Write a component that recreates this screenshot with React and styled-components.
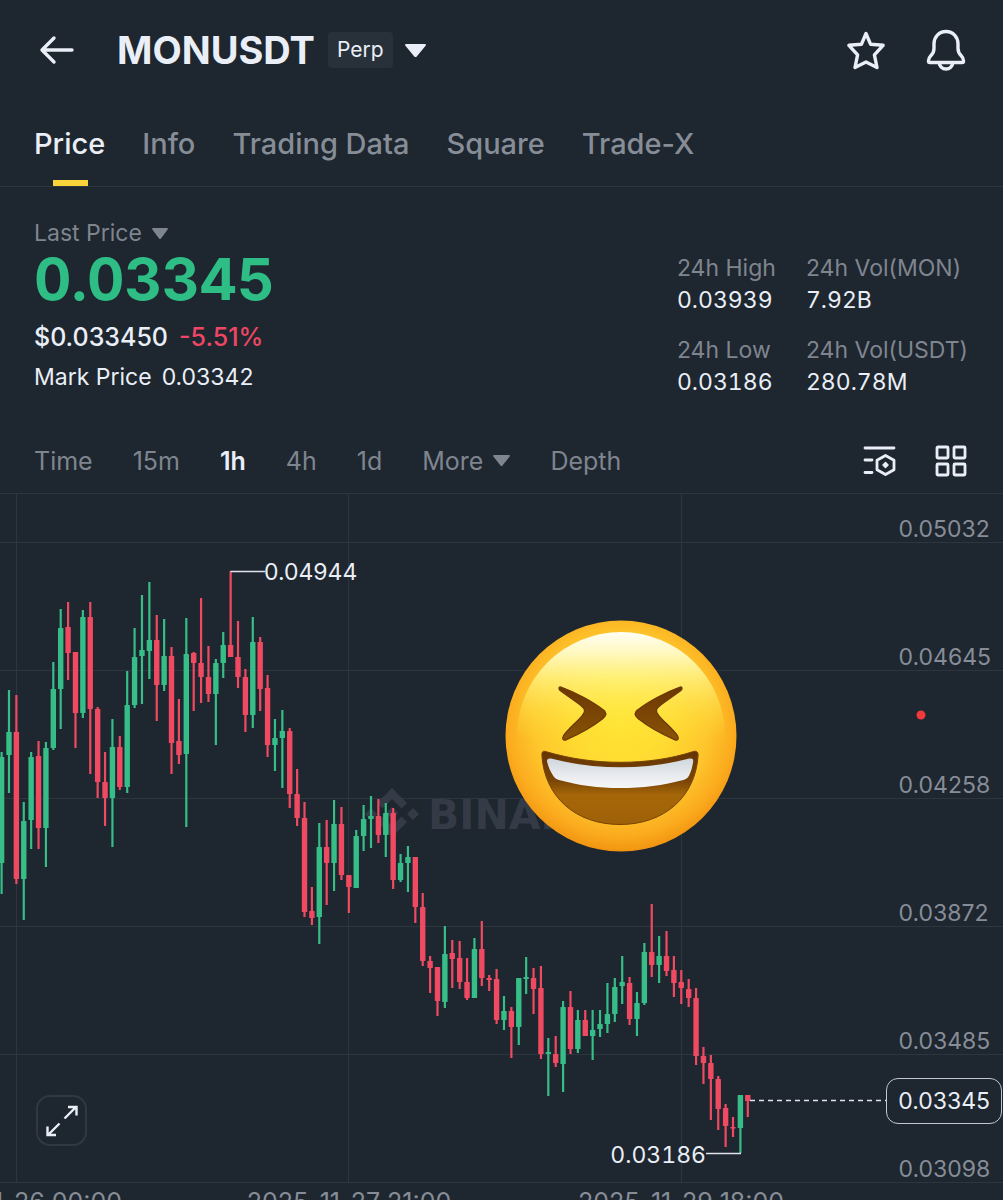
import React, { useState } from 'react';
import styled, { createGlobalStyle } from 'styled-components';

const GlobalStyle = createGlobalStyle`
  * { box-sizing: border-box; }
  body {
    margin: 0;
    background: #1e262f;
    color: #eaeef6;
    font-family: 'Inter', 'Liberation Sans', sans-serif;
  }
  button {
    font: inherit;
    color: inherit;
    background: none;
    border: none;
    padding: 0;
    cursor: pointer;
  }
  a { color: inherit; text-decoration: none; }
  svg { display: block; }
`;

const Page = styled.div`
  width: 100%;
  overflow: hidden;
`;

const Header = styled.header`
  display: flex;
  align-items: center;
  height: 100px;
  padding: 0 36px;
`;

const IconButton = styled.button`
  display: grid;
  place-items: center;
  width: 42px;
  height: 42px;
`;

const Symbol = styled.h1`
  margin: 0 13px 0 39px;
  font-size: 38px;
  line-height: 44px;
  font-weight: 700;
`;

const Badge = styled.span`
  padding: 0 9px;
  border-radius: 4px;
  background: #28303a;
  font-size: 21px;
  line-height: 36px;
`;

const SymbolMenu = styled.button`
  padding: 12px;
`;

const Actions = styled.div`
  display: flex;
  gap: 38px;
  margin-left: auto;
`;

const Tabs = styled.nav`
  display: flex;
  gap: 37px;
  height: 87px;
  padding: 24px 34px 0;
  border-bottom: 1px solid #2d353e;
`;

const Tab = styled.a`
  position: relative;
  font-size: 29px;
  line-height: 40px;
  font-weight: 500;
  color: ${p => p.$active ? '#eaeef6' : '#868d97'};

  &::after {
    content: '';
    display: ${p => p.$active ? 'block' : 'none'};
    position: absolute;
    left: 50%;
    bottom: 0;
    width: 35px;
    height: 6px;
    margin-left: -17px;
    background: #f8d33a;
  }
`;

const Summary = styled.section`
  display: flex;
  justify-content: space-between;
  padding: 30px 35px 0 34px;
  height: 241px;
`;

const PriceType = styled.button`
  display: flex;
  align-items: center;
  gap: 10px;
  font-size: 23px;
  line-height: 32px;
  color: #7f858f;
`;

const LastPrice = styled.div`
  font-size: 58px;
  line-height: 60px;
  font-weight: 700;
  font-variant-numeric: tabular-nums;
  color: #2ebd85;
`;

const FiatRow = styled.div`
  display: flex;
  gap: 11px;
  margin-top: 8px;
  font-size: 25px;
  line-height: 40px;
  font-weight: 500;
`;

const Change = styled.span`
  color: #ee4664;
`;

const MarkRow = styled.div`
  display: flex;
  gap: 10px;
  font-size: 23px;
  line-height: 40px;
`;

const Stats = styled.dl`
  display: grid;
  grid-template-columns: 129px auto;
  row-gap: 18px;
  align-content: start;
  margin: 35px 0 0;
  font-size: 23px;
  line-height: 32px;

  dt { color: #7f858f; }
  dd { margin: 0; font-variant-numeric: tabular-nums; }
`;

const Toolbar = styled.div`
  display: flex;
  align-items: center;
  height: 65px;
  padding: 0 36px 0 34px;
`;

const Intervals = styled.div`
  display: flex;
  align-items: center;
  gap: 40px;
`;

const Interval = styled.button`
  display: flex;
  align-items: center;
  gap: 10px;
  font-size: 25px;
  line-height: 32px;
  font-weight: ${p => p.$active ? 600 : 400};
  color: ${p => p.$active ? '#eaeef6' : '#7f858f'};
`;

const ToolIcons = styled.div`
  display: flex;
  gap: 38px;
  margin-left: auto;
`;

const Chart = styled.section`
  position: relative;
  height: 689px;
  border-top: 1px solid #2d353e;
`;

const Plot = styled.svg`
  width: 100%;
  height: 689px;
`;

const PriceScale = styled.div`
  position: absolute;
  top: 20px;
  right: 12px;
  display: grid;
  grid-auto-rows: 128px;
  font-size: 23px;
  line-height: 30px;
  color: #868d97;
`;

const CurrentPrice = styled.div`
  position: absolute;
  right: 1px;
  top: 584px;
  padding: 0 11px;
  border: 1px solid #c3c8d0;
  border-radius: 12px;
  background: #1e262f;
  font-size: 23px;
  line-height: 44px;
`;

const ExpandButton = styled.button`
  position: absolute;
  left: 36px;
  top: 601px;
  display: grid;
  place-items: center;
  width: 51px;
  height: 51px;
  border: 2px solid #303843;
  border-radius: 14px;
  background: #1e262f;
`;

const Sticker = styled.svg`
  position: absolute;
  left: 505px;
  top: 126px;
`;

const TimeScale = styled.div`
  position: relative;
  height: 18px;
  overflow: hidden;
  font-size: 25px;
  line-height: 32px;
  color: #868d97;
`;

const TimeLabel = styled.time`
  position: absolute;
  top: 4px;
  transform: translateX(-50%);
  white-space: nowrap;
`;

const tabs = ['Price', 'Info', 'Trading Data', 'Square', 'Trade-X'];
const intervals = ['Time', '15m', '1h', '4h', '1d', 'More', 'Depth'];
const scale = ['0.05032', '0.04645', '0.04258', '0.03872', '0.03485', '0.03098'];
const times = [
  { x: 16, label: '2025-11-26 00:00' },
  { x: 349, label: '2025-11-27 21:00' },
  { x: 681, label: '2025-11-29 18:00' },
];

const UP = 1;
const DOWN = 0;

// [high, body top, body bottom, low, direction]
const candles = [
  [258, 263, 369, 400, UP], [196, 238, 261, 299, UP], [201, 238, 385, 390, DOWN],
  [308, 327, 385, 426, UP], [258, 263, 326, 355, UP], [247, 262, 334, 355, DOWN],
  [248, 254, 334, 373, UP], [168, 195, 254, 256, UP], [115, 134, 195, 235, UP],
  [108, 133, 159, 186, DOWN], [158, 158, 219, 254, DOWN], [116, 123, 219, 224, UP],
  [108, 123, 215, 280, DOWN], [213, 215, 288, 304, DOWN], [258, 288, 304, 332, DOWN],
  [225, 253, 304, 353, UP], [242, 253, 293, 296, DOWN], [177, 211, 293, 299, UP],
  [134, 163, 211, 214, UP], [101, 156, 162, 210, UP], [88, 146, 157, 185, UP],
  [121, 146, 191, 227, DOWN], [125, 162, 191, 197, UP], [153, 162, 249, 280, DOWN],
  [205, 247, 261, 270, DOWN], [124, 160, 260, 333, UP], [158, 159, 169, 217, DOWN],
  [104, 169, 183, 209, DOWN], [152, 183, 200, 208, DOWN], [165, 169, 200, 251, UP],
  [138, 151, 169, 184, UP], [77, 151, 163, 163, DOWN], [127, 163, 183, 194, DOWN],
  [175, 183, 221, 238, DOWN], [123, 148, 221, 234, UP], [143, 148, 195, 217, DOWN],
  [181, 194, 251, 263, DOWN], [225, 244, 251, 277, UP], [216, 237, 244, 294, UP],
  [234, 237, 300, 314, DOWN], [275, 300, 324, 332, DOWN], [308, 324, 418, 423, DOWN],
  [393, 417, 424, 431, DOWN], [329, 353, 423, 450, UP], [326, 353, 369, 411, DOWN],
  [306, 330, 369, 397, UP], [313, 330, 381, 386, DOWN], [381, 381, 393, 419, DOWN],
  [336, 342, 394, 394, UP], [311, 325, 342, 357, UP], [302, 322, 325, 354, UP],
  [305, 322, 341, 349, DOWN], [309, 319, 341, 363, UP], [314, 319, 386, 395, DOWN],
  [360, 369, 386, 388, UP], [352, 363, 369, 398, UP], [363, 363, 413, 429, DOWN],
  [399, 413, 467, 472, DOWN], [462, 467, 474, 499, DOWN], [473, 473, 507, 522, DOWN],
  [432, 460, 508, 514, UP], [446, 459, 465, 494, DOWN], [447, 464, 488, 495, DOWN],
  [464, 488, 504, 506, DOWN], [444, 455, 504, 504, UP], [427, 455, 484, 492, DOWN],
  [481, 484, 486, 497, DOWN], [475, 485, 526, 530, DOWN], [502, 517, 526, 536, UP],
  [513, 517, 533, 564, DOWN], [484, 484, 533, 551, UP], [463, 483, 485, 500, UP],
  [474, 484, 495, 520, DOWN], [472, 494, 560, 565, DOWN], [544, 558, 560, 602, UP],
  [542, 560, 569, 573, DOWN], [507, 513, 570, 598, UP], [497, 513, 555, 560, DOWN],
  [516, 526, 555, 559, UP], [516, 526, 542, 542, DOWN], [516, 536, 542, 566, UP],
  [516, 530, 535, 543, UP], [489, 520, 530, 539, UP], [484, 493, 520, 528, UP],
  [462, 488, 492, 510, UP], [483, 489, 525, 531, DOWN], [498, 509, 525, 542, UP],
  [449, 458, 509, 511, UP], [410, 458, 471, 483, DOWN], [442, 462, 471, 489, UP],
  [437, 462, 477, 482, DOWN], [462, 476, 489, 503, DOWN], [476, 488, 494, 510, DOWN],
  [485, 495, 504, 513, DOWN], [494, 504, 562, 571, DOWN], [553, 562, 569, 590, DOWN],
  [561, 569, 585, 626, DOWN], [582, 585, 615, 636, DOWN], [610, 614, 632, 653, DOWN],
  [623, 633, 634, 643, DOWN], [601, 601, 634, 659, UP], [601, 601, 607, 623, DOWN],
];

const candleX = i => 1.6 + i * 7.388;

const Caret = ({ width, height, color }) => (
  <svg width={width} height={height} viewBox="0 0 20 13" preserveAspectRatio="none" aria-hidden="true">
    <path d="M1.2 0h17.6c1 0 1.5 1 .8 1.8l-8.4 10.6c-.6.8-1.8.8-2.4 0L.4 1.800C-.3 1 .2 0 1.200 0z" fill={color} />
  </svg>
);

const BackIcon = () => (
  <svg width="36" height="30" viewBox="0 0 36 30" fill="none" stroke="#eaeef6" strokeWidth="3.4" strokeLinecap="round" strokeLinejoin="round">
    <path d="M33 15H3M15 3 3 15l12 12" />
  </svg>
);

const StarIcon = () => (
  <svg width="40" height="40" viewBox="0 0 40 40" fill="none" stroke="#eaeef6" strokeWidth="3.400" strokeLinejoin="round">
    <path d="M20 3.500l4.500 10.700 12.600 1.100-8.700 9.600 2.600 12.600L20 31.900 9 37.500l2.600-12.600-8.700-9.600 12.600-1.100z" />
  </svg>
);

const BellIcon = () => (
  <svg width="42" height="42" viewBox="0 0 42 42" fill="none" stroke="#eaeef6" strokeWidth="3.400" strokeLinejoin="round">
    <path d="M21 2.500c-7 0-12 5.400-12 12.300v4.400c0 3.200-1 5.400-3.200 7.600-1.600 1.600-2.300 3.100-2.300 5v.5c0 .8.500 1.200 1.200 1.200h32.600c.7 0 1.200-.4 1.200-1.200v-.5c0-1.900-.7-3.400-2.300-5-2.200-2.200-3.200-4.400-3.200-7.600v-4.400C33 7.900 28 2.500 21 2.500z" />
    <path d="M14 33.500c.6 3.800 3.300 6.500 7 6.500s6.400-2.700 7-6.500" />
  </svg>
);

const IndicatorIcon = () => (
  <svg width="34" height="32" viewBox="0 0 34 32" fill="none" stroke="#eaeef6" strokeWidth="2.800" strokeLinecap="round" strokeLinejoin="round">
    <path d="M2 3h29M2 15h7M2 27.500h7" />
    <path d="M22.500 10.500l8.500 4.800v9.400l-8.500 4.800-8.500-4.800v-9.400z" />
    <path d="M22.500 17.500l2.500 2.500-2.500 2.500-2.500-2.500z" fill="#eaeef6" strokeWidth="1.500" />
  </svg>
);

const GridIcon = () => (
  <svg width="32" height="32" viewBox="0 0 32 32" fill="none" stroke="#eaeef6" strokeWidth="2.800">
    <rect x="2" y="2" width="11" height="11" rx="1" />
    <rect x="19" y="2" width="11" height="11" rx="1" />
    <rect x="2" y="19" width="11" height="11" rx="1" />
    <rect x="19" y="19" width="11" height="11" rx="1" />
  </svg>
);

const ExpandIcon = () => (
  <svg width="34" height="34" viewBox="0 0 34 34" fill="none" stroke="#eaeef6" strokeWidth="2.400">
    <path d="M19.500 14.500 31 3M23 3h8.500v8.500" />
    <path d="M14.500 19.500 3 31M2.500 22.500V31H11" />
  </svg>
);

const LaughingFace = () => (
  <Sticker width="232" height="232" viewBox="0 0 232 232" role="img" aria-label="Laughing face">
    <defs>
      <radialGradient id="skin" cx="50%" cy="44%" r="58%">
        <stop offset="0" stopColor="#ffe433" />
        <stop offset="0.35" stopColor="#ffdb31" />
        <stop offset="0.65" stopColor="#fec62c" />
        <stop offset="0.85" stopColor="#fbab1e" />
        <stop offset="1" stopColor="#ee8e0c" />
      </radialGradient>
      <linearGradient id="shine" x1="0" y1="0" x2="0" y2="1">
        <stop offset="0" stopColor="#fffef4" />
        <stop offset="0.1" stopColor="#fffbc8" stopOpacity="0.95" />
        <stop offset="0.22" stopColor="#fff78c" stopOpacity="0.75" />
        <stop offset="0.36" stopColor="#fff05c" stopOpacity="0.4" />
        <stop offset="0.52" stopColor="#ffe638" stopOpacity="0" />
      </linearGradient>
      <linearGradient id="mouth" x1="0" y1="0" x2="0" y2="1">
        <stop offset="0" stopColor="#653404" />
        <stop offset="0.4" stopColor="#7a4506" />
        <stop offset="0.6" stopColor="#a56708" />
        <stop offset="1" stopColor="#9f6108" />
      </linearGradient>
      <linearGradient id="teeth" x1="0" y1="0" x2="0" y2="1">
        <stop offset="0" stopColor="#cfd6dc" />
        <stop offset="0.5" stopColor="#e6e9ec" />
        <stop offset="1" stopColor="#f6f7f8" />
      </linearGradient>
      <linearGradient id="eye" x1="0" y1="0" x2="0" y2="1">
        <stop offset="0" stopColor="#6b3803" />
        <stop offset="1" stopColor="#8a5206" />
      </linearGradient>
    </defs>
    <circle cx="116" cy="116" r="115.500" fill="url(#skin)" />
    <circle cx="116" cy="116" r="104" fill="url(#shine)" />
    <g fill="url(#eye)" stroke="#6a3a05" strokeWidth="1.200">
      <path d="M56.500 67.200c-3.200-1.200-3.300 2.300-.8 3.900l17.600 12.300c6.500 4.600 8 7.200 4.300 11.600-4.600 6.100-14.500 13.600-19.100 20.700-1.900 3.200-.2 5.300 3 3.900 9.500-4.100 26.500-13.200 36.500-21.100 4-3.200 4-5.900 0-8.900-9.500-7.600-27.500-17.300-41.500-22.400z" />
      <path d="M174.500 67.200c3.200-1.200 3.300 2.300.8 3.900l-17.600 12.300c-6.500 4.600-8 7.200-4.300 11.600 4.600 6.100 14.500 13.600 19.100 20.700 1.900 3.200.2 5.300-3 3.900-9.500-4.100-26.500-13.200-36.500-21.100-4-3.200-4-5.900 0-8.900 9.500-7.600 27.500-17.300 41.500-22.400z" />
    </g>
    <path d="M40.500 131.500c25 7.500 50 10.800 75 10.800s50-3.300 73-10.800c3-.9 4.800.6 4.600 4-2.600 41.500-34 69-78.100 69s-75.500-27.500-78.100-69c-.2-3.400 1-4.900 3.600-4z" fill="url(#mouth)" stroke="#754306" strokeWidth="1" />
    <path d="M42 141c0-2.300 1.600-3 4-2.400 22 5.800 45.500 8.600 69.500 8.600s47-2.800 69-8.600c2.600-.6 4 .3 3.700 2.600-.6 5-2 10-4 14-1.200 2.600-3 4-5.800 4.700-20 5.300-41 8.100-63 8.100s-42-2.800-61.500-8.100c-2.800-.8-4.600-2.200-6-4.700-2.600-4.200-5-9.200-5.900-14.200z" fill="url(#teeth)" />
  </Sticker>
);

const PricePlot = () => (
  <Plot>
    <g stroke="#2d353e">
      {[48.5, 176.5, 304.5, 432.5, 560.5, 688.5].map(y => <line key={y} x1="0" x2="100%" y1={y} y2={y} />)}
      {[16.5, 348.5, 681.5].map(x => <line key={x} x1={x} x2={x} y1="0" y2="688" />)}
    </g>

    <g fill="#343b46">
      <path d="M392 294l15 15-5.500 5.500-9.500-9.500-9.500 9.500-5.500-5.500zM392 343l15-15-5.500-5.500-9.500 9.500-9.500-9.500-5.500 5.500zM413 314l6 6-6 6-6-6zM371 314l6 6-6 6-6-6zM392 313l6 6-6 6-6-6z" />
      <text x="428" y="335" fontFamily="DejaVu Sans, sans-serif" fontSize="41" fontWeight="700">BINANCE</text>
    </g>

    {candles.map(([high, top, bottom, low, dir], i) => {
      const x = candleX(i);
      const color = dir === UP ? '#36bd88' : '#f04a62';
      return (
        <g key={i} fill={color}>
          <rect x={x - 1.1} y={high} width="2.200" height={low - high} />
          <rect x={x - 2.7} y={top} width="5.400" height={Math.max(bottom - top, 1.5)} rx="0.600" />
        </g>
      );
    })}

    <g stroke="#dfe3ea" strokeWidth="1.300" fill="none">
      <path d="M230.500 77.500H265" />
      <path d="M706 659.500h35" />
      <line x1="750" x2="99%" y1="606.500" y2="606.500" strokeDasharray="5 4" />
    </g>
    <g fill="#eaeef6" fontSize="23">
      <text x="264" y="86">0.04944</text>
      <text x="706" y="669" textAnchor="end" style={{ fontVariantNumeric: 'tabular-nums' }}>0.03186</text>
    </g>
    <circle cx="921" cy="221" r="4.500" fill="#f03a3c" />
  </Plot>
);

export default function App() {
  const [interval, setInterval] = useState('1h');

  return (
    <Page>
      <GlobalStyle />
      <Header>
        <IconButton type="button" aria-label="Back"><BackIcon /></IconButton>
        <Symbol>MONUSDT</Symbol>
        <Badge>Perp</Badge>
        <SymbolMenu type="button" aria-label="Choose symbol">
          <Caret width={21} height={13} color="#eaeef6" />
        </SymbolMenu>
        <Actions>
          <IconButton type="button" aria-label="Favorite"><StarIcon /></IconButton>
          <IconButton type="button" aria-label="Alerts"><BellIcon /></IconButton>
        </Actions>
      </Header>

      <Tabs>
        {tabs.map((t, i) => <Tab key={t} href="#" $active={i === 0}>{t}</Tab>)}
      </Tabs>

      <Summary>
        <div>
          <PriceType type="button">
            Last Price
            <Caret width={16} height={11} color="#7f858f" />
          </PriceType>
          <LastPrice>0.03345</LastPrice>
          <FiatRow><span>$0.033450</span><Change>-5.51%</Change></FiatRow>
          <MarkRow><span>Mark Price</span><span>0.03342</span></MarkRow>
        </div>
        <Stats>
          <div><dt>24h High</dt><dd>0.03939</dd></div>
          <div><dt>24h Vol(MON)</dt><dd>7.92B</dd></div>
          <div><dt>24h Low</dt><dd>0.03186</dd></div>
          <div><dt>24h Vol(USDT)</dt><dd>280.78M</dd></div>
        </Stats>
      </Summary>

      <Toolbar>
        <Intervals>
          {intervals.map(t => (
            <Interval key={t} type="button" $active={t === interval} onClick={() => setInterval(t)}>
              {t}
              {t === 'More' && <Caret width={17} height={11} color="#7f858f" />}
            </Interval>
          ))}
        </Intervals>
        <ToolIcons>
          <button type="button" aria-label="Indicators"><IndicatorIcon /></button>
          <button type="button" aria-label="Layout"><GridIcon /></button>
        </ToolIcons>
      </Toolbar>

      <Chart>
        <PricePlot />
        <PriceScale>{scale.map(p => <span key={p}>{p}</span>)}</PriceScale>
        <CurrentPrice>0.03345</CurrentPrice>
        <ExpandButton type="button" aria-label="Full screen"><ExpandIcon /></ExpandButton>
        <LaughingFace />
      </Chart>
      <TimeScale>
        {times.map(t => <TimeLabel key={t.label} style={{ left: t.x }}>{t.label}</TimeLabel>)}
      </TimeScale>
    </Page>
  );
}
